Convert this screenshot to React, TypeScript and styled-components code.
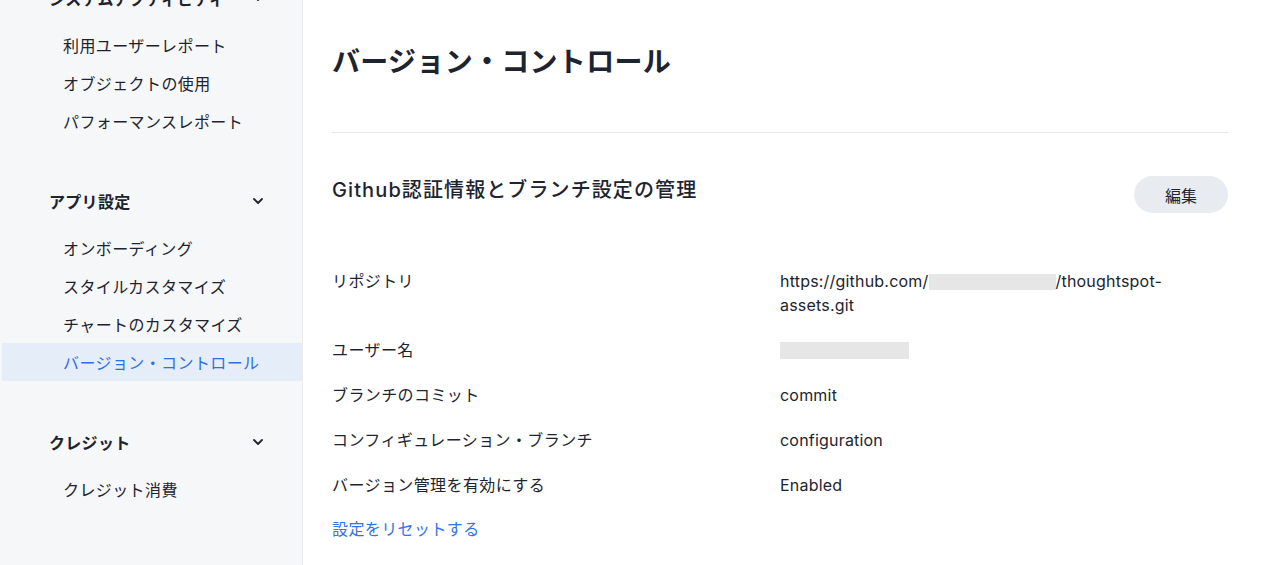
import styled, { createGlobalStyle } from 'styled-components';

const GlobalStyle = createGlobalStyle`
  html, body {
    margin: 0;
    padding: 0;
    background: #ffffff;
    font-family: Inter, "Noto Sans CJK JP", "Noto Sans", sans-serif;
    color: #1d232f;
  }
`;

const Page = styled.div`
  display: flex;
  width: 1280px;
  height: 565px;
  overflow: hidden;
`;

const Sidebar = styled.aside`
  width: 302px;
  flex-shrink: 0;
  background: #f6f7f9;
  border-right: 1px solid #e7e9ed;
  overflow: hidden;
`;

const NavList = styled.div`
  margin-top: -21px;
  display: flex;
  flex-direction: column;
  gap: 42px;
`;

const Section = styled.div`
  display: flex;
  flex-direction: column;
`;

const SectionHead = styled.div`
  height: 38px;
  margin-bottom: 9px;
  padding: 0 39px 0 49px;
  display: flex;
  align-items: center;
  justify-content: space-between;
  font-size: 16px;
  font-weight: 700;
  letter-spacing: 0.3px;
  color: #1d232f;
`;

const Item = styled.div<{ $active?: boolean }>`
  height: 38px;
  margin-left: 2px;
  padding-left: 61px;
  display: flex;
  align-items: center;
  font-size: 16px;
  letter-spacing: 0.4px;
  color: ${(p) => (p.$active ? '#2e6fe6' : '#1d232f')};
  background: ${(p) => (p.$active ? '#e5edf9' : 'transparent')};
`;

const Main = styled.main`
  flex: 1;
  padding: 44px 52px 0 29px;
`;

const Title = styled.h1`
  margin: 0;
  font-size: 28px;
  line-height: 36px;
  font-weight: 700;
  letter-spacing: 0.3px;
`;

const Divider = styled.hr`
  margin: 52px 0 0;
  border: 0;
  border-top: 1px solid #e8e8e8;
`;

const HeadRow = styled.div`
  margin-top: 43px;
  display: flex;
  justify-content: space-between;
  align-items: flex-start;
`;

const Heading = styled.h2`
  margin: 0;
  font-size: 20px;
  line-height: 28px;
  font-weight: 500;
  letter-spacing: 1.1px;
`;

const Button = styled.button`
  width: 94px;
  height: 37px;
  border: 0;
  border-radius: 19px;
  background: #e8ebf0;
  font-family: inherit;
  font-size: 16px;
  color: #1d232f;
`;

const Fields = styled.div`
  margin-top: 56px;
  display: grid;
  grid-template-columns: 448px 1fr;
  row-gap: 21px;
  font-size: 16px;
  line-height: 24px;
`;

const Label = styled.div`
  letter-spacing: 0.4px;
`;

const Value = styled.div`
  max-width: 400px;
  letter-spacing: 0.2px;
`;

const Redacted = styled.span<{ $w: number; $h: number }>`
  display: inline-block;
  width: ${(p) => p.$w}px;
  height: ${(p) => p.$h}px;
  background: #e6e6e6;
  vertical-align: -3px;
`;

const ResetLink = styled.a`
  margin-top: 20px;
  display: block;
  font-size: 16px;
  line-height: 24px;
  letter-spacing: 0.4px;
  color: #2f74eb;
  text-decoration: none;
`;

const Chevron = () => (
  <svg width="10" height="6" viewBox="0 0 10 6" fill="none">
    <path d="M1 1l4 4 4-4" stroke="#1d232f" strokeWidth="1.8" strokeLinecap="round" strokeLinejoin="round" />
  </svg>
);

const nav = [
  { head: 'システムアクティビティ', items: ['利用ユーザーレポート', 'オブジェクトの使用', 'パフォーマンスレポート'] },
  { head: 'アプリ設定', items: ['オンボーディング', 'スタイルカスタマイズ', 'チャートのカスタマイズ', 'バージョン・コントロール'] },
  { head: 'クレジット', items: ['クレジット消費'] },
];

const App = () => {
  return (
    <Page>
      <GlobalStyle />
      <Sidebar>
        <NavList>
          {nav.map((s) => (
            <Section key={s.head}>
              <SectionHead>
                {s.head}
                <Chevron />
              </SectionHead>
              {s.items.map((it) => (
                <Item key={it} $active={it === 'バージョン・コントロール'}>
                  {it}
                </Item>
              ))}
            </Section>
          ))}
        </NavList>
      </Sidebar>
      <Main>
        <Title>バージョン・コントロール</Title>
        <Divider />
        <HeadRow>
          <Heading>Github認証情報とブランチ設定の管理</Heading>
          <Button>編集</Button>
        </HeadRow>
        <Fields>
          <Label>リポジトリ</Label>
          <Value>
            https://github.com/<Redacted $w={127} $h={16} />/thoughtspot-assets.git
          </Value>
          <Label>ユーザー名</Label>
          <Value>
            <Redacted $w={129} $h={17} />
          </Value>
          <Label>ブランチのコミット</Label>
          <Value>commit</Value>
          <Label>コンフィギュレーション・ブランチ</Label>
          <Value>configuration</Value>
          <Label>バージョン管理を有効にする</Label>
          <Value>Enabled</Value>
        </Fields>
        <ResetLink href="#">設定をリセットする</ResetLink>
      </Main>
    </Page>
  );
};

export default App;
